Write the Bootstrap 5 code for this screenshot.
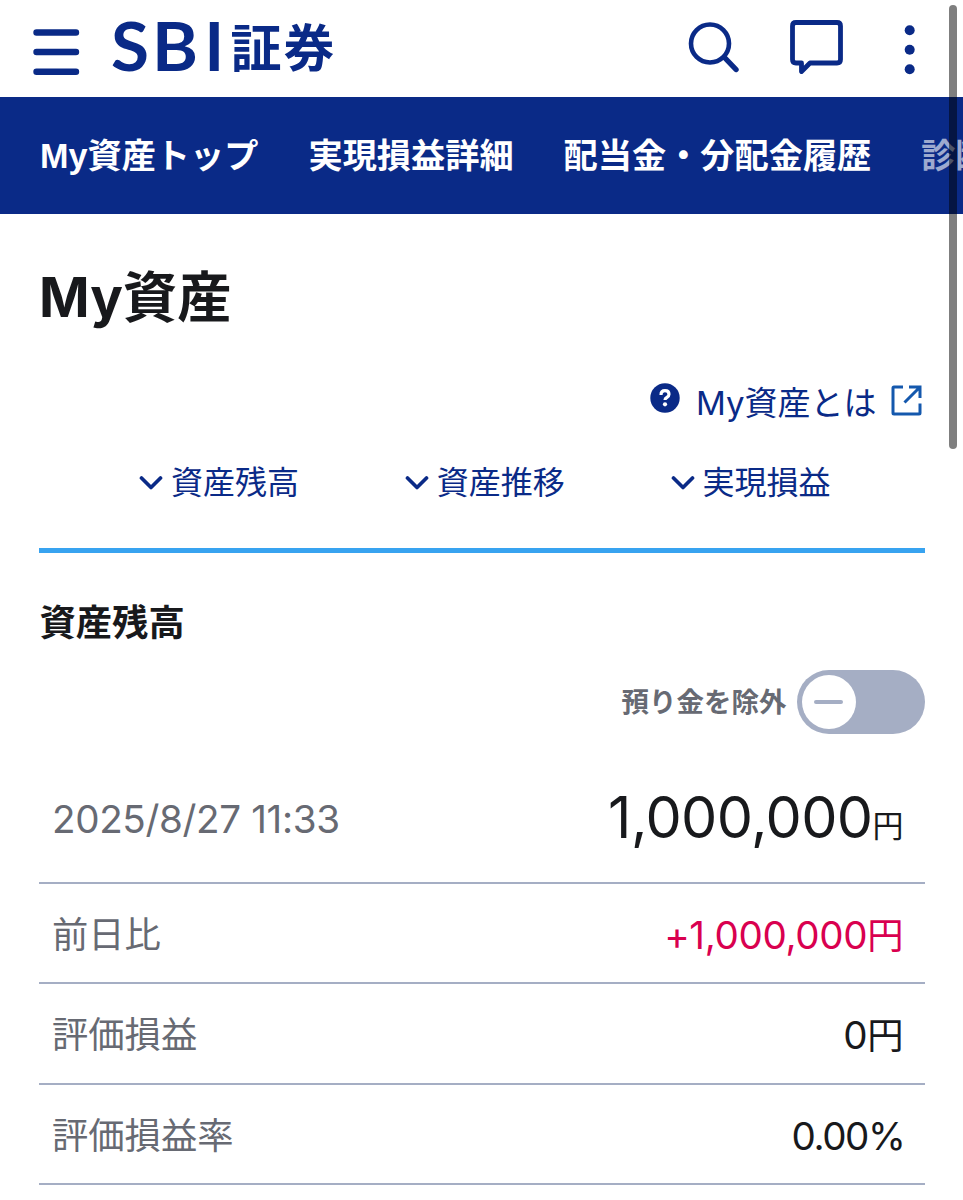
<!DOCTYPE html>
<html lang="ja">
<head>
<meta charset="utf-8">
<meta name="viewport" content="width=device-width, initial-scale=1">
<title>My資産</title>
<link href="https://cdn.jsdelivr.net/npm/bootstrap@5.3.0/dist/css/bootstrap.min.css" rel="stylesheet">
<style>
:root { --navy:#0a2a87; --ink:#18191c; --muted:#676a73; --rule:#a5aec4; }
body { font-family:Inter,"Noto Sans CJK JP",sans-serif; color:var(--ink); height:1200px; overflow:hidden; line-height:1; }
a { color:var(--navy); text-decoration:none; }
svg { display:block; flex:none; }
.app-top { height:97px; padding:0 46px 0 33px; }
.app-tabs { height:117px; background:var(--navy); padding:2px 40px 0; gap:50px; font-family:"Liberation Sans","Noto Sans CJK JP",sans-serif; font-size:34.2px; font-weight:700; overflow:hidden; }
.app-tabs a { color:#fff; white-space:nowrap; flex:none; }
.app-tabs a.faded { opacity:.6; }
.app-main { padding:0 38.5px 0 39px; }
.page-title { font-size:54.300px; font-weight:700; height:166px; padding:2px 0 0; }
.about { height:48px; font-size:33px; padding-right:3px; }
.about a { margin-top:-2px; }
.about .help { margin-top:-12px; }
.about .ext { margin:-7px 0 0 14px; }
.jump { height:116px; font-size:32px; padding:0 41px 6px 47px; }
.section-rule { height:5px; background:#38a3f0; margin-top:4px; }
.section-title { font-size:36.300px; font-weight:700; height:117px; padding:24px 0 0 .5px; }
.exclude { font-size:27.5px; font-weight:600; color:var(--muted); height:64px; margin-bottom:22.5px; }
.exclude > span { padding:1px 2px 0 0; }
.switcher { width:128px; height:64px; border-radius:32px; background:var(--rule); padding:5px; }
.switcher .knob { width:54px; height:54px; border-radius:50%; background:#fff; }
.switcher .dash { width:29px; height:4.5px; border-radius:3px; background:var(--rule); }
.balance { height:100.6px; border-bottom:2.5px solid var(--rule); font-size:36.3px; padding:4px 21px 0 13px; }
.balance .name { color:var(--muted); }
.balance.total { height:127px; padding-top:0; }
.balance.total .amount { margin-top:-2px; }
.num { font-size:38.600px; letter-spacing:-.35px; }
.num-xl { font-size:57.500px; letter-spacing:-.600px; }
.rate { letter-spacing:-1.400px; margin-right:-1px; }
.unit { font-size:31px; position:relative; top:-1px; }
.gain { color:#d9004f; }
.scroll-thumb { position:absolute; left:949px; top:5px; width:8px; height:444px; border-radius:4px; background:rgba(0,0,0,.5); }
</style>
</head>
<body class="bg-white position-relative">
<header class="app-top d-flex align-items-start justify-content-between">
  <div class="d-flex">
    <svg width="310" height="97" viewBox="33 0 310 97" fill="#0a2a87">
      <g stroke="#0a2a87" stroke-width="6.4" stroke-linecap="round"><path d="M36.5 32.5H76M36.5 52H76M36.5 71.7H76"/></g>
      <g font-family="Lato" font-weight="700" font-size="66">
        <text y="71" x="111" textLength="38" lengthAdjust="spacingAndGlyphs">S</text>
        <text y="71" x="152" textLength="46" lengthAdjust="spacingAndGlyphs">B</text>
        <text y="71" x="204.500">I</text>
      </g>
      <text x="230.5" y="66.5" font-family="Noto Sans CJK JP" font-weight="700" font-size="51" textLength="104">証券</text>
    </svg>
  </div>
  <div class="d-flex">
    <svg width="230" height="97" viewBox="687 0 230 97" fill="none" stroke="#0a2a87" stroke-linecap="round" stroke-linejoin="round">
      <circle cx="710" cy="43.5" r="19" stroke-width="4.6"/>
      <path d="M724.5 57.5L736 69.5" stroke-width="5.4"/>
      <path d="M796 22.5H837Q840.5 22.5 840.5 26V59.5Q840.5 63 837 63H810L801.5 71.5V63H796Q792.5 63 792.5 59.5V26Q792.5 22.5 796 22.5Z" stroke-width="4.8"/>
      <g fill="#0a2a87" stroke="none"><circle cx="909.7" cy="30.3" r="5"/><circle cx="909.7" cy="49.8" r="5"/><circle cx="909.7" cy="69.3" r="5"/></g>
    </svg>
  </div>
</header>
<nav class="app-tabs d-flex align-items-center">
  <a href="#">My資産トップ</a><a href="#">実現損益詳細</a><a href="#">配当金・分配金履歴</a><a href="#" class="faded">診断</a>
</nav>
<main class="app-main">
  <h1 class="page-title d-flex align-items-center m-0"><span>My資産</span></h1>
  <div class="about d-flex justify-content-end align-items-center">
    <svg width="30" height="30" viewBox="0 0 30 30" class="help me-3"><circle cx="15" cy="15" r="14.7" fill="#0a2a87"/><path d="M11 12Q11 7.7 15 7.7Q19 7.7 19 11.3Q19 13.3 16.8 14.5Q15 15.5 15 17" fill="none" stroke="#fff" stroke-width="3.2"/><circle cx="15" cy="21.3" r="2.1" fill="#fff"/></svg>
    <a href="#">My資産とは</a>
    <svg width="31" height="31" viewBox="0 0 31 31" fill="none" stroke="#1458ad" stroke-width="3" class="ext"><path d="M12 2H3Q2 2 2 3V28Q2 29 3 29H28Q29 29 29 28V18.500M18 2H29V13M29 2L13.500 17.500"/></svg>
  </div>
  <nav class="jump row g-0">
    <a href="#" class="col d-flex justify-content-center align-items-center gap-2"><svg width="24" height="16" viewBox="0 0 24 16"><path d="M2.500 3L12 12.500L21.500 3" fill="none" stroke="#0a2a87" stroke-width="3.700" stroke-linecap="round" stroke-linejoin="round"/></svg><span>資産残高</span></a>
    <a href="#" class="col d-flex justify-content-center align-items-center gap-2"><svg width="24" height="16" viewBox="0 0 24 16"><path d="M2.500 3L12 12.500L21.500 3" fill="none" stroke="#0a2a87" stroke-width="3.700" stroke-linecap="round" stroke-linejoin="round"/></svg><span>資産推移</span></a>
    <a href="#" class="col d-flex justify-content-center align-items-center gap-2"><svg width="24" height="16" viewBox="0 0 24 16"><path d="M2.500 3L12 12.500L21.500 3" fill="none" stroke="#0a2a87" stroke-width="3.700" stroke-linecap="round" stroke-linejoin="round"/></svg><span>実現損益</span></a>
  </nav>
  <div class="section-rule"></div>
  <h2 class="section-title d-flex align-items-center m-0"><span>資産残高</span></h2>
  <div class="exclude d-flex justify-content-end align-items-center">
    <span>預り金を除外</span>
    <div class="switcher ms-2" role="switch" aria-checked="false"><div class="knob d-flex align-items-center justify-content-center"><div class="dash"></div></div></div>
  </div>
  <section>
    <div class="balance total d-flex justify-content-between align-items-center"><span class="name num">2025/8/27 11:33</span><span class="amount"><span class="num-xl">1,000,000</span><span class="unit">円</span></span></div>
    <div class="balance d-flex justify-content-between align-items-center"><span class="name">前日比</span><span class="gain"><span class="num">+1,000,000</span>円</span></div>
    <div class="balance d-flex justify-content-between align-items-center"><span class="name">評価損益</span><span><span class="num">0</span>円</span></div>
    <div class="balance d-flex justify-content-between align-items-center"><span class="name">評価損益率</span><span class="num rate">0.00%</span></div>
  </section>
</main>
<div class="scroll-thumb"></div>
</body>
</html>
